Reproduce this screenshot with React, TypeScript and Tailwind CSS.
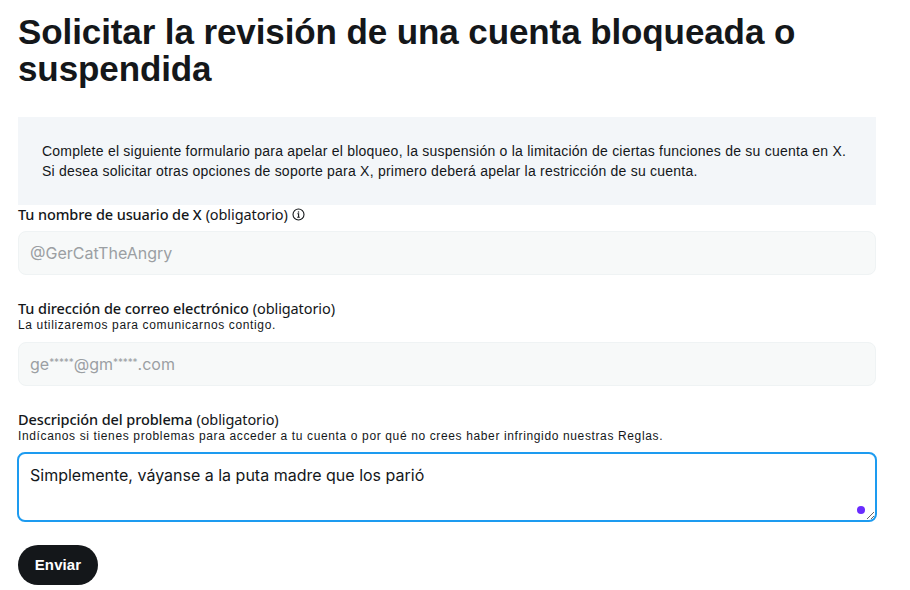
import type { ReactNode } from "react";

const sans = "font-['Liberation_Sans',Arial,sans-serif]";
const inputFont = "font-['Inter',Arial,sans-serif]";

function Label({ title, hint, info }: { title: string; hint?: string; info?: boolean }) {
  return (
    <div className="flex flex-col">
      <div className="flex items-center h-[18px] -mt-px mb-px text-[14.5px] leading-[18px] text-[#14171a] font-['Noto_Sans',sans-serif]">
        <span className="font-medium tracking-[-0.1px]">{title}</span>
        <span className="ml-1 tracking-[-0.1px]">(obligatorio)</span>
        {info && (
          <svg className="ml-1 w-[13px] h-[13px]" viewBox="0 0 13 13" fill="none" stroke="#14171a">
            <circle cx="6.5" cy="6.5" r="5.5" strokeWidth="1.1" />
            <path d="M5.4 5.8h1.2v3.4M5.2 9.3h2.6" strokeWidth="1.1" />
            <path d="M6.5 3.4v1.2" strokeWidth="1.3" />
          </svg>
        )}
      </div>
      {hint && <p className={`${sans} text-[12px] leading-[15px] tracking-[0.63px] text-[#14171a]`}>{hint}</p>}
    </div>
  );
}

function ReadOnlyField({ children }: { children: ReactNode }) {
  return (
    <div className={`${inputFont} flex items-center w-full h-[44px] rounded-[8px] border border-[#eff3f4] bg-[#f7f9f9] px-[11px] text-[16px] text-[#9b9fa3]`}>
      <span>{children}</span>
    </div>
  );
}

function Stars() {
  return <span className="text-[10px] tracking-[-0.1px] align-[4px]">*****</span>;
}

export default function App() {
  return (
    <div className={`${sans} w-[910px] h-[590px] overflow-hidden bg-white px-[18px] pt-[13px]`}>
      <div className="w-[858px]">
        <h1 className="text-[35px] leading-[37px] font-bold tracking-[-0.1px] text-[#14171a]">
          Solicitar la revisión de una cuenta bloqueada o suspendida
        </h1>

        <div className="mt-[30px] h-[88px] bg-[#f3f6f9] pl-6 pt-[24px] text-[14px] leading-[20px] tracking-[0.23px] text-[#14171a]">
          <p>Complete el siguiente formulario para apelar el bloqueo, la suspensión o la limitación de ciertas funciones de su cuenta en X.</p>
          <p>Si desea solicitar otras opciones de soporte para X, primero deberá apelar la restricción de su cuenta.</p>
        </div>

        <div className="mt-[1px]">
          <Label title="Tu nombre de usuario de X" info />
          <div className="mt-[7px]"><ReadOnlyField>@GerCatTheAngry</ReadOnlyField></div>
        </div>

        <div className="mt-[25px]">
          <Label title="Tu dirección de correo electrónico" hint="La utilizaremos para comunicarnos contigo." />
          <div className="mt-[9px]"><ReadOnlyField>ge<Stars />@gm<Stars />.com</ReadOnlyField></div>
        </div>

        <div className="mt-[25px]">
          <Label title="Descripción del problema" hint="Indícanos si tienes problemas para acceder a tu cuenta o por qué no crees haber infringido nuestras Reglas." />
          <div className="relative mt-[8px]">
            <textarea
              readOnly
              defaultValue="Simplemente, váyanse a la puta madre que los parió"
              className={`${inputFont} block -ml-px w-[860px] h-[70px] rounded-[8px] border-2 border-[#1d9bf0] bg-white px-[11px] py-[11px] text-[16px] leading-[20px] text-[#14171a] outline-none`}
            />
            <span className="absolute right-[11px] bottom-[8px] w-2 h-2 rounded-full bg-[#6a2cff]" />
          </div>
        </div>

        <button className="mt-[23px] block w-[80px] h-[40px] rounded-full bg-[#14171a] text-[15px] tracking-[0.1px] font-bold text-white">
          Enviar
        </button>
      </div>
    </div>
  );
}
